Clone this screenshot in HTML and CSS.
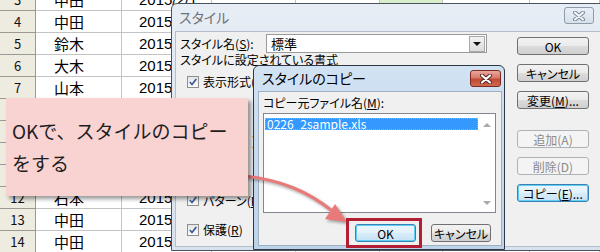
FILE: index.html
```html
<!DOCTYPE html>
<html lang="ja">
<head>
<meta charset="utf-8">
<link rel="stylesheet" href="styles.css">
</head>
<body>
<div class="sheet">
  <div class="rh">3</div><div class="nm">中田</div><div class="dt">2015/2/1</div><div></div><div></div><div class="green"></div><div></div><div></div>
  <div class="rh">4</div><div class="nm">中田</div><div class="dt">2015/2/2</div><div></div><div></div><div></div><div></div><div></div>
  <div class="rh">5</div><div class="nm">鈴木</div><div class="dt">2015/2/3</div><div></div><div></div><div></div><div></div><div></div>
  <div class="rh">6</div><div class="nm">大木</div><div class="dt">2015/2/4</div><div></div><div></div><div></div><div></div><div></div>
  <div class="rh">7</div><div class="nm">山本</div><div class="dt">2015/2/5</div><div></div><div></div><div></div><div></div><div></div>
  <div class="rh"></div><div class="nm"></div><div class="dt"></div><div></div><div></div><div></div><div></div><div></div>
  <div class="rh"></div><div class="nm"></div><div class="dt"></div><div></div><div></div><div></div><div></div><div></div>
  <div class="rh"></div><div class="nm"></div><div class="dt"></div><div></div><div></div><div></div><div></div><div></div>
  <div class="rh"></div><div class="nm"></div><div class="dt"></div><div></div><div></div><div></div><div></div><div></div>
  <div class="rh">12</div><div class="nm">石本</div><div class="dt">2015/2/10</div><div></div><div></div><div></div><div></div><div></div>
  <div class="rh">13</div><div class="nm">中田</div><div class="dt">2015/2/11</div><div></div><div></div><div></div><div></div><div></div>
  <div class="rh">14</div><div class="nm">中田</div><div class="dt">2015/2/12</div><div></div><div></div><div></div><div></div><div></div>
</div>

<div class="dlg main">
  <div class="title">スタイル
    <span class="xbtn inactive"><svg width="12" height="10" viewBox="0 0 12 10"><path d="M2 1.5 L10 8.5 M10 1.5 L2 8.5" stroke="#7d8794" stroke-width="4" stroke-linecap="round"/><path d="M2 1.5 L10 8.5 M10 1.5 L2 8.5" stroke="#f6f8fb" stroke-width="2" stroke-linecap="round"/></svg></span>
  </div>
  <div class="body">
    <div class="left">
      <div class="field">
        <span class="flabel">スタイル名(<u>S</u>):</span>
        <div class="combo"><span class="ctext">標準</span><span class="dd"><i class="tri-down"></i></span></div>
      </div>
      <div class="section">スタイルに設定されている書式</div>
      <div class="checks">
        <div class="chk"><span class="cb"><svg width="10" height="10" viewBox="0 0 10 10"><path d="M1.8 5 L4 7.5 L8.3 2" fill="none" stroke="#3b5897" stroke-width="1.7"/></svg></span>表示形式(<u>N</u>)</div>
        <div class="chk"><span class="cb"><svg width="10" height="10" viewBox="0 0 10 10"><path d="M1.8 5 L4 7.5 L8.3 2" fill="none" stroke="#3b5897" stroke-width="1.7"/></svg></span></div>
        <div class="chk"><span class="cb"><svg width="10" height="10" viewBox="0 0 10 10"><path d="M1.8 5 L4 7.5 L8.3 2" fill="none" stroke="#3b5897" stroke-width="1.7"/></svg></span><span class="tail">)</span></div>
        <div class="chk"><span class="cb"><svg width="10" height="10" viewBox="0 0 10 10"><path d="M1.8 5 L4 7.5 L8.3 2" fill="none" stroke="#3b5897" stroke-width="1.7"/></svg></span></div>
        <div class="chk"><span class="cb"><svg width="10" height="10" viewBox="0 0 10 10"><path d="M1.8 5 L4 7.5 L8.3 2" fill="none" stroke="#3b5897" stroke-width="1.7"/></svg></span>パターン(<u>P</u>)</div>
        <div class="chk"><span class="cb"><svg width="10" height="10" viewBox="0 0 10 10"><path d="M1.8 5 L4 7.5 L8.3 2" fill="none" stroke="#3b5897" stroke-width="1.7"/></svg></span>保護(<u>R</u>)</div>
      </div>
    </div>
    <div class="right">
      <div class="btn">OK</div>
      <div class="btn">キャンセル</div>
      <div class="btn">変更(<u>M</u>)...</div>
      <div class="btn disabled gap">追加(A)</div>
      <div class="btn disabled">削除(D)</div>
      <div class="btn focus">コピー(<u>E</u>)...</div>
    </div>
  </div>
</div>

<div class="dlg copy">
  <div class="title">スタイルのコピー
    <span class="xbtn red"><svg width="12" height="10" viewBox="0 0 12 10"><path d="M2 1.5 L10 8.5 M10 1.5 L2 8.5" stroke="#5a2a24" stroke-width="4.2" stroke-linecap="round"/><path d="M2 1.5 L10 8.5 M10 1.5 L2 8.5" stroke="#ffffff" stroke-width="2.2" stroke-linecap="round"/></svg></span>
  </div>
  <div class="body">
    <div class="clabel">コピー元ファイル名(<u>M</u>):</div>
    <div class="listbox">
      <div class="items"><div class="sel">0226_2sample.xls</div></div>
      <div class="scroll"><i class="tri-up"></i><i class="tri-dn"></i></div>
    </div>
    <div class="btnrow">
      <div class="btn ok focus">OK</div>
      <div class="btn cancel">キャンセル</div>
    </div>
  </div>
</div>

<svg class="arrow" width="600" height="252" viewBox="0 0 600 252">
  <g class="arrowg">
    <path d="M244 176 C 282 180 308 192 331 210" fill="none" stroke="#e87a7a" stroke-width="3.2"/>
    <polygon points="347,222 325,219 335,204" fill="#e87a7a"/>
  </g>
</svg>

<div class="callout">OKで、スタイルのコピー<br>をする</div>

<div class="hl"></div>
</body>
</html>
```

FILE: styles.css
```css
* { box-sizing: border-box; margin: 0; padding: 0; }
html, body { width: 600px; height: 252px; overflow: hidden; background: #fff; }
body {
  position: relative;
  font-family: "Noto Sans CJK JP", "Noto Sans", sans-serif;
  color: #000;
}
u { text-decoration: underline; text-underline-offset: 1px; }

/* spreadsheet */
.sheet {
  display: grid;
  grid-template-columns: 36px 86px 90px 84px 84px 63px 87px 70px;
  grid-auto-rows: 22px;
  margin-top: -11px;
}
.sheet > div {
  border-right: 1px solid #c4c4c4;
  border-bottom: 1px solid #c4c4c4;
  display: flex;
  align-items: center;
  font-size: 15px;
  white-space: nowrap;
  overflow: hidden;
}
.sheet > .rh {
  background: #eeece1;
  border-color: #9c9a90;
  justify-content: center;
  font-size: 13px;
  color: #111;
}
.sheet > .nm { padding-left: 18px; }
.sheet > .dt { padding-left: 17px; font-family: "Liberation Sans", sans-serif; font-size: 15px; }
.sheet > .green { background: #d9efc9; }

/* dialogs */
.dlg {
  position: absolute;
  display: flex;
  flex-direction: column;
  border: 1px solid #49525e;
  border-radius: 6px 6px 0 0;
  font-size: 12px;
  font-feature-settings: "palt";
}
.dlg .title { position: relative; white-space: nowrap; }
.dlg .body { flex: 1; background: #f0f0f0; }

.main {
  left: 171px;
  top: 3px;
  width: 440px;
  height: 248px;
  background: linear-gradient(#e6edf5, #d8e2ee);
  padding: 0 0 3px 3px;
}
.main .title {
  height: 27px;
  line-height: 27px;
  padding-left: 4px;
  font-size: 14px;
  color: #6e7279;
}
.main .body {
  border: 1px solid #b4c0ce;
  border-right: none;
  display: flex;
  padding: 2px 0 0 4px;
}
.left { width: 330px; display: flex; flex-direction: column; }
.field { display: flex; align-items: center; height: 19px; }
.flabel { width: 86px; }
.combo {
  width: 221px;
  height: 19px;
  border: 1px solid #9a9a9a;
  background: #fff;
  display: flex;
  align-items: center;
  padding: 0 1px 0 4px;
  font-size: 13px;
}
.ctext { flex: 1; }
.dd {
  width: 16px;
  height: 16px;
  border: 1px solid #a8a8a8;
  background: linear-gradient(#f3f3f3, #dcdcdc);
  display: flex;
  align-items: center;
  justify-content: center;
}
.tri-down {
  width: 0; height: 0;
  border-left: 4px solid transparent;
  border-right: 4px solid transparent;
  border-top: 4px solid #111;
}
.section { height: 14px; line-height: 14px; white-space: nowrap; }
.checks { display: flex; flex-direction: column; }
.chk {
  height: 29.6px;
  display: flex;
  align-items: center;
  padding-left: 7px;
  white-space: nowrap;
}
.tail { margin-left: 49px; }
.cb {
  width: 12px;
  height: 12px;
  border: 1px solid #8e8f8f;
  background: linear-gradient(#e6e6e6, #fafafa);
  margin-right: 4px;
  display: flex;
  align-items: center;
  justify-content: center;
}
.cb svg { display: block; }

.right { width: 72px; margin-left: 7px; padding-top: 3px; display: flex; flex-direction: column; }
.btn {
  height: 18px;
  border: 1px solid #707070;
  border-radius: 3px;
  background: linear-gradient(#f2f2f2 0%, #ebebeb 48%, #dcdcdc 52%, #cfcfcf 100%);
  display: flex;
  align-items: center;
  justify-content: center;
  white-space: nowrap;
  font-size: 12px;
  color: #000;
}
.right .btn + .btn { margin-top: 9px; }
.right .btn.gap { margin-top: 21px; }
.btn.disabled {
  border-color: #adb2b5;
  background: #f4f4f4;
  color: #8a8a8a;
}
.btn.focus {
  border-color: #3c7fb1;
  box-shadow: inset 0 0 0 1px #5fd0f5;
  background: linear-gradient(#eaf6fd 0%, #e3f1fa 48%, #d7ecf9 52%, #c7e3f6 100%);
}

.xbtn {
  position: absolute;
  width: 30px;
  height: 17px;
  border-radius: 3px;
  display: flex;
  align-items: center;
  justify-content: center;
}
.xbtn svg { display: block; }
.xbtn.inactive {
  left: 389px;
  top: 3px;
  border: 1px solid #8d9bab;
  background: linear-gradient(#e9eff6, #d6e0eb);
}

.copy {
  left: 253px;
  top: 65px;
  width: 252px;
  height: 185px;
  background: linear-gradient(#d1e2f3, #bdd3ea);
  padding: 0 2px 3px 4px;
  border-color: #2e3844;
  z-index: 2;
}
.copy .title {
  height: 25px;
  line-height: 25px;
  padding-left: 4px;
  font-size: 14px;
  color: #000;
}
.xbtn.red {
  right: 1px;
  top: 4px;
  width: 31px;
  border: 1px solid #7d2a20;
  background: linear-gradient(#e9a99c 0%, #d7796b 45%, #c24a35 55%, #cf6a4f 100%);
}
.copy .body {
  border: 1px solid #9fb0c3;
  padding: 4px 5px 0 4px;
  display: flex;
  flex-direction: column;
}
.clabel { height: 14px; line-height: 14px; white-space: nowrap; }
.listbox {
  margin-top: 3px;
  height: 100px;
  border: 1px solid #828790;
  background: #fff;
  display: flex;
}
.items { flex: 1; padding: 4px 0 0 1px; }
.sel {
  height: 12px;
  line-height: 12px;
  background: #3399ff;
  color: #fff;
  padding-left: 2px;
  outline: 1px dotted #f0a050;
  outline-offset: -1px;
  font-size: 12px;
  font-family: "Noto Sans CJK JP", sans-serif;
  font-feature-settings: normal;
}
.scroll {
  width: 17px;
  display: flex;
  flex-direction: column;
  justify-content: space-between;
  align-items: center;
  padding: 9px 0 7px;
}
.tri-up, .tri-dn {
  width: 0; height: 0;
  border-left: 4px solid transparent;
  border-right: 4px solid transparent;
}
.tri-up { border-bottom: 4px solid #a8a8a8; }
.tri-dn { border-top: 4px solid #a8a8a8; }

.btnrow {
  margin-top: 11px;
  display: flex;
  justify-content: flex-end;
  gap: 15px;
  padding-right: 5px;
}
.btn.ok { width: 61px; }
.btn.cancel { width: 60px; }

/* overlay annotations */
.arrow {
  position: absolute;
  left: 0;
  top: 0;
  z-index: 3;
  pointer-events: none;
}
.arrowg { filter: drop-shadow(2px 2px 1.5px rgba(0, 0, 0, 0.35)); }

.callout {
  position: absolute;
  left: 6px;
  top: 98px;
  width: 242px;
  height: 98px;
  background: #f9d2d2;
  box-shadow: 3px 3px 4px rgba(0, 0, 0, 0.4);
  padding: 17px 0 0 6px;
  font-size: 19px;
  line-height: 32px;
  color: #1e1e1e;
  white-space: nowrap;
  z-index: 4;
}

.hl {
  position: absolute;
  left: 346px;
  top: 218px;
  width: 76px;
  height: 30px;
  border: 3px solid #b41e34;
  z-index: 5;
}
```
